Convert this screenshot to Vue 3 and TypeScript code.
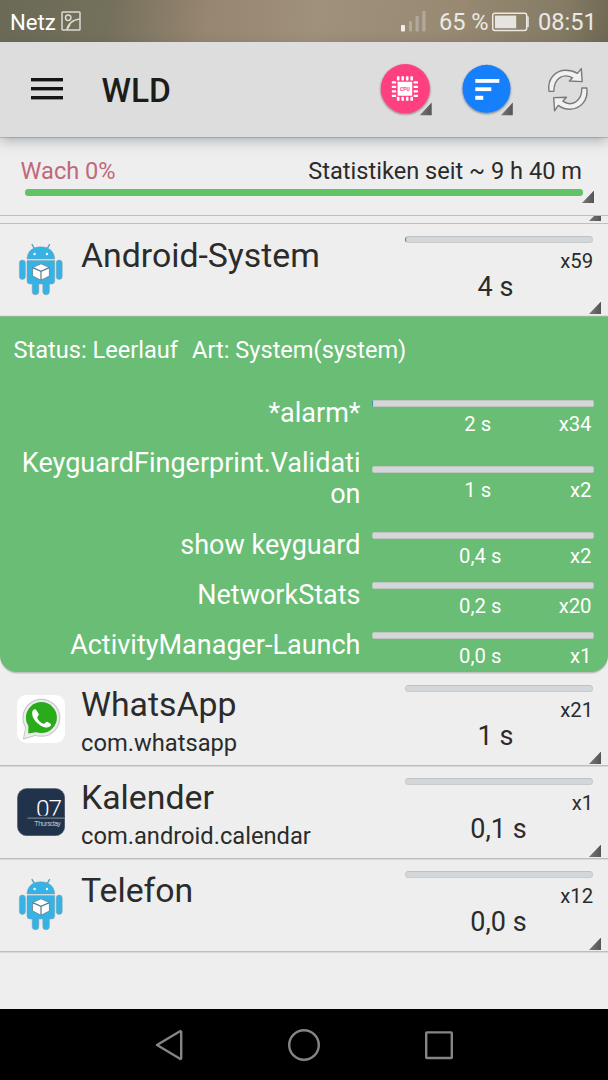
<script setup lang="ts">
interface WakeLock { name: string; time: string; count: string; active?: boolean }
interface AppRow { id: string; name: string; pkg?: string; time: string; count: string; icon: 'android' | 'whatsapp' | 'calendar'; active?: boolean }

const expanded: AppRow = { id: 'sys', name: 'Android-System', time: '4 s', count: 'x59', icon: 'android', active: true }
const others: AppRow[] = [
  { id: 'wa', name: 'WhatsApp', pkg: 'com.whatsapp', time: '1 s', count: 'x21', icon: 'whatsapp' },
  { id: 'cal', name: 'Kalender', pkg: 'com.android.calendar', time: '0,1 s', count: 'x1', icon: 'calendar' },
  { id: 'tel', name: 'Telefon', time: '0,0 s', count: 'x12', icon: 'android' },
]
const rows: AppRow[] = [expanded, ...others]
const locks: WakeLock[] = [
  { name: '*alarm*', time: '2 s', count: 'x34', active: true },
  { name: 'KeyguardFingerprint.Validation', time: '1 s', count: 'x2' },
  { name: 'show keyguard', time: '0,4 s', count: 'x2' },
  { name: 'NetworkStats', time: '0,2 s', count: 'x20' },
  { name: 'ActivityManager-Launch', time: '0,0 s', count: 'x1' },
]
const pinsX = [396.5, 401, 405.5, 410]
const isFraction = (time: string): boolean => time.includes(',')
</script>

<template>
  <div class="screen">
    <header class="status">
      <span class="carrier">Netz</span>
      <svg class="pic" width="20" height="20" viewBox="0 0 20 20" fill="none" stroke="#dcdad4" stroke-width="1.5">
        <rect x="1" y="1" width="18" height="18" rx="0.8" />
        <circle cx="7.2" cy="6.8" r="2.7" />
        <path d="M6 19C6.6 13.5 11.5 8.6 19 8M6 19L9 13.5" />
      </svg>
      <svg class="signal" width="26" height="22" viewBox="0 0 26 22">
        <rect x="1" y="15" width="4" height="6.5" rx="0.8" fill="#f0eeea" />
        <g fill="#b3a8a0">
          <rect x="9" y="11" width="3" height="10.5" rx="0.8" />
          <rect x="15.5" y="6" width="3.2" height="15.5" rx="0.8" />
          <rect x="22.3" y="1" width="3.2" height="20.5" rx="0.8" />
        </g>
      </svg>
      <span class="percent">65 %</span>
      <svg class="battery" width="39" height="20" viewBox="0 0 39 20">
        <rect x="1.7" y="1.2" width="34" height="17.2" rx="2.2" fill="none" stroke="#e9e7e2" stroke-width="1.5" />
        <path d="M36 5.2h1v9h-1" fill="none" stroke="#e9e7e2" stroke-width="1.5" />
        <rect x="4" y="3.6" width="21.2" height="12.6" fill="#e6e4e0" />
      </svg>
      <span class="clock">08:51</span>
    </header>

    <nav class="appbar">
      <svg class="menu" width="32" height="24" viewBox="0 0 32 24" fill="#151515">
        <rect y="1" width="32" height="3.4" /><rect y="10" width="32" height="3.4" /><rect y="19" width="32" height="3.4" />
      </svg>
      <h1>WLD</h1>
      <svg class="actions" width="238" height="80" viewBox="370 50 238 80">
        <defs>
          <filter id="drop" x="-20%" y="-20%" width="140%" height="150%">
            <feDropShadow dx="0" dy="1" stdDeviation="0.8" flood-color="#000" flood-opacity="0.5" />
          </filter>
          <linearGradient id="tri" x1="0" y1="0" x2="1" y2="0"><stop offset="0" stop-color="#777" /><stop offset="1" stop-color="#555" /></linearGradient>
        </defs>
        <circle cx="405.3" cy="88.7" r="24.6" fill="#fe4080" filter="url(#drop)" />
        <g fill="#fff">
          <rect x="397.6" y="81.7" width="14.6" height="14" rx="0.6" />
          <g v-for="p in pinsX" :key="p">
            <rect :x="p + 0.4" y="76.2" width="2.6" height="4.2" rx="0.6" />
            <rect :x="p + 0.4" y="96.8" width="2.6" height="4" rx="0.6" />
            <rect x="391.8" :y="p - 315.2" width="4.4" height="2.2" rx="0.6" />
            <rect x="413.6" :y="p - 315.2" width="4.4" height="2.2" rx="0.6" />
          </g>
        </g>
        <text x="404.9" y="90.6" text-anchor="middle" textLength="9.6" class="cpu">CPU</text>
        <path d="M431.7 102.5V115.3H419.8Z" fill="url(#tri)" />
        <circle cx="486.5" cy="88.8" r="24" fill="#167ffb" filter="url(#drop)" />
        <g fill="#fff">
          <rect x="475.3" y="79" width="24" height="3.8" />
          <rect x="475.3" y="87.3" width="16" height="3.8" />
          <rect x="475.3" y="95.8" width="8" height="4" />
        </g>
        <path d="M512.8 102.5V115.3H501Z" fill="url(#tri)" />
        <g fill="#f1f1f1" stroke="#7a7a7a" stroke-width="1.4" stroke-linejoin="round">
          <path d="M549 91.2C547.2 78 556 70.3 566 70.3C571 70.3 574.6 71.7 577.4 73.4L581.3 68.6L582.2 81.6L569.3 81L572.6 77.8C564.6 73.4 554 76.5 553.8 91.4Z" />
          <path d="M586.8 88C588.6 101 580 109 570 109.2C565.2 109.2 561 107.6 558.2 105.4L554.6 110.8L553.7 97.6L566.5 97.2L562.8 101.2C571 106.8 582 102.4 581.8 88Z" />
        </g>
      </svg>
    </nav>

    <section class="summary">
      <div class="summary-text"><span class="awake">Wach 0%</span><span>Statistiken seit ~ 9 h 40 m</span></div>
      <div class="summary-bar"></div>
      <i class="corner corner-summary"></i>
    </section>
    <div class="sliver"><i class="corner corner-cut"></i></div>

    <template v-for="row in rows" :key="row.id">
      <article class="row" :class="'row-' + row.id">
        <div class="icon">
          <svg v-if="row.icon === 'android'" width="46" height="54" viewBox="0 0 46 54">
            <g fill="#35b3e7" stroke="#8c9aa1" stroke-width="0.5">
              <path d="M13.8 2.2L16.6 6.8M31.8 2.2L29 6.8" stroke="#4c9fc0" stroke-width="1.3" />
              <path d="M9 17C9.3 9.4 14.4 4.8 22.8 4.8C31 4.8 36.4 9.4 36.7 17Z" />
              <path d="M9 18.6H36.7V39Q36.7 42 33.7 42H31.4V49.5A3.1 3.1 0 0 1 24.8 49.5V42H20.8V49.5A3.1 3.1 0 0 1 14.2 49.5V42H12Q9 42 9 39Z" />
              <rect x="1.4" y="18" width="6" height="19.4" rx="3" />
              <rect x="38.2" y="18" width="6" height="19.4" rx="3" />
            </g>
            <g fill="#fff"><circle cx="16.6" cy="12" r="1.2" /><circle cx="29" cy="12" r="1.2" /></g>
            <path d="M23 21.8L31.4 25.6V34L23 38.2L14.6 34V25.6Z" fill="#fff" stroke="#667f8b" stroke-width="0.8" />
            <path d="M14.6 25.6L23 29.4L31.4 25.6M23 29.4V38.2" fill="none" stroke="#56798a" stroke-width="1.2" />
          </svg>
          <svg v-else-if="row.icon === 'whatsapp'" width="48" height="48" viewBox="0 0 48 48">
            <rect width="48" height="48" rx="9.5" fill="#fff" />
            <g fill="#ececec" stroke="#c9c9c9" stroke-width="1.2" stroke-linejoin="round">
              <path d="M8.6 33L6.6 43.8L18 40.5Z" />
              <circle cx="24.4" cy="22.8" r="18.4" />
            </g>
            <path d="M9.2 32L7.4 43L18.4 39.6Z" fill="#ececec" />
            <circle cx="24.4" cy="22.6" r="15.5" fill="#2aab1a" />
            <path d="M11.4 30.5L11.3 38.4L20 37Z" fill="#2aab1a" />
            <path d="M16 15.2C17.2 14 18.4 13.9 19.3 15L21.7 18.9C22.3 20.2 20.3 21.4 20.2 22.4C20.8 25 24 28 26.8 28.8C28 28.9 29 26.5 30.3 26.8L33.5 28.8C34.5 29.4 34.1 31 32.4 31.8C26.8 35 14.2 25.2 15.2 17.4Q15.4 15.8 16 15.2Z" fill="#fff" />
          </svg>
          <svg v-else width="48" height="48" viewBox="0 0 48 48">
            <rect x="0.4" y="0.4" width="47.4" height="47.4" rx="9.5" fill="#20334b" stroke="#506071" stroke-width="0.6" />
            <text x="45" y="28.8" text-anchor="end" class="day" textLength="26">07</text>
            <rect x="10.5" y="27.6" width="37" height="3" fill="#20334b" />
            <rect x="10.5" y="29.6" width="37.5" height="1" fill="#8b96a0" />
            <text x="43.8" y="37.6" text-anchor="end" class="weekday" textLength="26.5">Thursday</text>
          </svg>
        </div>
        <div class="names">
          <div class="name">{{ row.name }}</div>
          <div v-if="row.pkg" class="pkg">{{ row.pkg }}</div>
        </div>
        <div class="usage">
          <div class="track" :class="{ active: row.active }"></div>
          <div class="count">{{ row.count }}</div>
          <div class="time" :class="{ fraction: isFraction(row.time) }">{{ row.time }}</div>
        </div>
        <i class="corner"></i>
      </article>

      <section v-if="row.id === 'sys'" class="details">
        <div class="details-head"><span>Status: Leerlauf</span><span>Art: System(system)</span></div>
        <div v-for="lock in locks" :key="lock.name" class="lock">
          <div class="lock-name">{{ lock.name }}</div>
          <div class="lock-usage">
            <div class="track lock-track" :class="{ active: lock.active }"></div>
            <div class="lock-values"><span class="lock-time" :class="{ fraction: isFraction(lock.time) }">{{ lock.time }}</span><span class="lock-count">{{ lock.count }}</span></div>
          </div>
        </div>
      </section>
    </template>

    <footer class="navbar">
      <svg width="300" height="40" viewBox="154 1025 300 40" fill="none" stroke="#858585" stroke-width="2.4" stroke-linejoin="round">
        <path d="M157 1045L180 1031.3Q181.2 1031 181.2 1032V1058Q181.2 1059.3 180 1058.8Z" />
        <circle cx="304" cy="1045" r="14.8" />
        <rect x="426.2" y="1032.4" width="25.6" height="25.6" rx="0.6" />
      </svg>
    </footer>
  </div>
</template>

<style>
body { margin: 0; background: #eee; }
</style>

<style scoped>
.screen { width: 608px; height: 1080px; display: flex; flex-direction: column; overflow: hidden; background: #eee; color: #2b2b2b; font-family: Roboto, sans-serif; white-space: nowrap; }
.status { height: 42px; box-sizing: border-box; padding-left: 10px; display: flex; align-items: center; flex: none; color: #ebe9e5; font-size: 23.6px; line-height: 40px; background: linear-gradient(100deg, #6a6a57 0%, #74705b 18%, #978671 34%, #a0917b 52%, #978972 75%, #857b65 92%, #6f6853 100%); }
.status > * { flex: none; }
.carrier { width: 51px; color: #fff; font-size: 22.2px; padding-top: 2px; }
.pic { margin-right: 319px; }
.signal { margin-right: 13px; }
.percent { width: 52px; padding-top: 2px; }
.battery { margin: 2px 8px 0 0; }
.clock { padding-top: 2px; }
.appbar { position: relative; z-index: 2; height: 95px; flex: none; display: flex; align-items: center; background: #ddd; box-shadow: 0 1px 1px rgba(0, 0, 0, .14), 0 4px 12px rgba(60, 75, 85, .36); }
.menu { margin: 0 0 2px 31px; }
h1 { margin: 3px 0 0 38.5px; font-size: 33.5px; line-height: 40px; font-weight: 500; color: #1c1c1c; }
.actions { margin-left: auto; }
.cpu { font: bold 5px Roboto, sans-serif; fill: #fe4080; }
.summary { position: relative; height: 79px; box-sizing: border-box; flex: none; border-bottom: 1px solid #c0c0c0; }
.summary-text { display: flex; justify-content: space-between; padding: 20px 26px 0 20.5px; font-size: 23.6px; line-height: 28px; }
.awake { color: #c0697a; }
.summary-bar { margin: 4px 25px 0; height: 6.5px; border-radius: 3.2px; background: #60c365; }
.corner { position: absolute; right: 7px; bottom: 1px; width: 12px; height: 12.5px; background: linear-gradient(90deg, #777, #555); clip-path: polygon(100% 0, 100% 100%, 0 100%); }
.corner-summary { right: 14px; bottom: 12px; }
.corner-cut { bottom: 2px; height: 5px; clip-path: polygon(100% 0, 100% 100%, 0 100%, 42% 0); }
.sliver { position: relative; height: 8px; box-sizing: border-box; flex: none; border-bottom: 1px solid #c0c0c0; overflow: hidden; }
.row { position: relative; height: 93px; box-sizing: border-box; flex: none; display: grid; grid-template-columns: 81px 1fr 188px; padding-right: 15.5px; border-bottom: 1px solid #bdbdbd; box-shadow: 0 1px rgba(190, 190, 190, .45); }
.row-sys { height: 92px; border-bottom-color: #e0e0e0; }
.icon { padding: 22.3px 0 0 16.6px; }
.row-sys .icon, .row-tel .icon { padding: 18px 0 0 18px; }
.name { margin-top: 12px; font-size: 33.8px; line-height: 40px; }
.pkg { margin-top: 4px; font-size: 23.7px; line-height: 28px; }
.track { margin-top: 12px; height: 7px; box-sizing: border-box; border: 1px solid #c8cacc; border-top-color: #bec2c5; border-radius: 3.5px; background: #d3d7d9; }
.track.active { border-left: 1.5px solid #3395b4; }
.count { margin: 6px -0.6px 0 0; text-align: right; font-size: 20.3px; line-height: 24px; }
.time { width: 182px; text-align: center; font-size: 27px; line-height: 28px; }
.time.fraction { width: 188px; }
.details { height: 356px; box-sizing: border-box; flex: none; background: #69bd74; color: #fff; border-radius: 0 0 17px 17px; box-shadow: 0 1px #c0c0c0, 0 2px #d6d6d6; padding-top: 20px; margin-bottom: 1px; }
.details-head { display: flex; gap: 14px; padding-left: 13.5px; font-size: 23.6px; line-height: 28px; margin-bottom: 33px; }
.lock { display: flex; align-items: center; padding-right: 14.5px; }
.lock-name { box-sizing: border-box; width: 360.5px; padding: 1px 0 18.2px 20px; text-align: right; font-size: 27px; line-height: 31.1px; white-space: normal; word-break: break-all; }
.lock-usage { margin-left: 11.5px; flex: 1; height: 50px; }
.lock-track { margin-top: 3px; border-radius: 2px; border-color: #bfc6c2; background: #d5d6da; }
.lock-values { display: flex; justify-content: flex-end; margin-top: 5px; padding-right: 2px; font-size: 20.3px; line-height: 24px; }
.lock-time { flex: 1; padding-left: 2px; text-align: center; }
.lock-time.fraction { padding-left: 7px; }
.lock-count { width: 10px; display: flex; justify-content: flex-end; }
.day { font: 300 24.5px Roboto, sans-serif; fill: #fff; }
.weekday { font: 300 7.4px Roboto, sans-serif; fill: #e6e9ed; }
.navbar { margin-top: auto; height: 71px; flex: none; display: flex; justify-content: center; align-items: center; background: #000; }
</style>
